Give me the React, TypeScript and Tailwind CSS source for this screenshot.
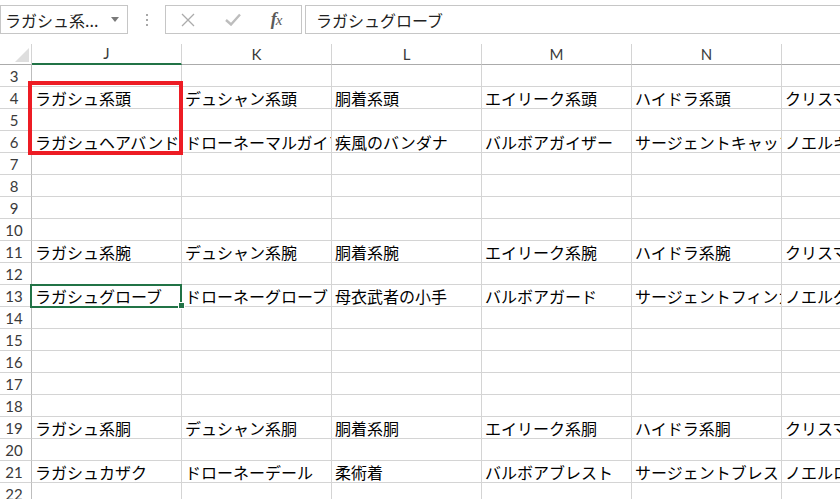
import React from "react";

const jp = { fontFamily: '"Noto Sans CJK JP", "Noto Sans", sans-serif' };
const lat = { fontFamily: 'Lato, "Open Sans", sans-serif' };

const cols = ["J", "K", "L", "M", "N", "O"];

const data: Record<number, string[]> = {
  4: ["ラガシュ系頭", "デュシャン系頭", "胴着系頭", "エイリーク系頭", "ハイドラ系頭", "クリスマス系頭"],
  6: ["ラガシュヘアバンド", "ドローネーマルガイア", "疾風のバンダナ", "バルボアガイザー", "サージェントキャップ", "ノエルキャップ"],
  11: ["ラガシュ系腕", "デュシャン系腕", "胴着系腕", "エイリーク系腕", "ハイドラ系腕", "クリスマス系腕"],
  13: ["ラガシュグローブ", "ドローネーグローブ", "母衣武者の小手", "バルボアガード", "サージェントフィンガー", "ノエルグローブ"],
  19: ["ラガシュ系胴", "デュシャン系胴", "胴着系胴", "エイリーク系胴", "ハイドラ系胴", "クリスマス系胴"],
  21: ["ラガシュカザク", "ドローネーデール", "柔術着", "バルボアブレスト", "サージェントブレスト", "ノエルローブ"],
};

const rows = Array.from({ length: 20 }, (_, i) => i + 3);

export default function App() {
  return (
    <div className="relative w-[840px] h-[499px] overflow-hidden bg-white select-none">
      {/* formula bar */}
      <div className="flex items-start h-[44px] pt-[5px]">
        <div
          className="w-[128px] shrink-0 h-[29px] border border-[#c6c6c6] flex items-center justify-between pl-[4px] pr-[8px] text-[16px] text-[#222]"
          style={jp}
        >
          <span className="whitespace-nowrap">ラガシュ系...</span>
          <svg width="8" height="5" viewBox="0 0 8 5">
            <path d="M0 0 L8 0 L4 5 Z" fill="#7a7a7a" />
          </svg>
        </div>
        <div className="w-[37px] shrink-0 h-[29px] flex flex-col items-center justify-center gap-[3px]">
          <div className="w-[2px] h-[2px] bg-[#a8a8a8]" />
          <div className="w-[2px] h-[2px] bg-[#a8a8a8]" />
          <div className="w-[2px] h-[2px] bg-[#a8a8a8]" />
        </div>
        <div className="w-[137px] shrink-0 h-[29px] border border-[#c6c6c6] flex items-center">
          <div className="w-[40px] flex justify-center ml-[2px]">
            <svg width="14" height="14" viewBox="0 0 14 14">
              <path d="M1 1 L13 13 M13 1 L1 13" stroke="#ababab" strokeWidth="1.3" />
            </svg>
          </div>
          <div className="w-[50px] flex justify-center">
            <svg width="16" height="13" viewBox="0 0 16 13">
              <path d="M1 7 L6 11.5 L15 1.5" stroke="#bdbdbd" strokeWidth="2.4" fill="none" />
            </svg>
          </div>
          <div
            className="flex-1 flex justify-center text-[18px] italic text-[#5a5a5a] pr-[6px]"
            style={{ fontFamily: '"Liberation Serif", serif' }}
          >
            <span className="font-bold tracking-[-1px]">f</span>
            <span className="text-[15px] mt-[3px]">x</span>
          </div>
        </div>
        <div
          className="flex-1 ml-[3px] mr-[-2px] h-[29px] border border-[#c6c6c6] flex items-center pl-[10px] text-[16px] text-[#222]"
          style={jp}
        >
          ラガシュグローブ
        </div>
      </div>

      {/* column headers */}
      <div className="flex h-[21px]">
        <div className="w-[32px] shrink-0 h-[21px] border-r border-b border-[#ababab] border-r-[#d4d4d4] relative">
          <svg className="absolute left-[15px] top-[4px]" width="14" height="14" viewBox="0 0 14 14">
            <path d="M14 0 L14 14 L0 14 Z" fill="#dedede" />
          </svg>
        </div>
        {cols.map((c, i) => (
          <div
            key={c}
            className={
              i === 0
                ? "w-[150px] shrink-0 h-[21px] border-r border-r-[#d4d4d4] border-b-2 border-b-[#217346] flex items-center justify-center text-[15px] text-[#3a3a3a]"
                : "w-[150px] shrink-0 h-[21px] border-r border-r-[#d4d4d4] border-b border-b-[#ababab] flex items-center justify-center text-[15px] text-[#3a3a3a]"
            }
            style={lat}
          >
            {c === "O" ? "" : c}
          </div>
        ))}
      </div>

      {/* grid rows */}
      {rows.map((r) => (
        <div key={r} className="flex h-[22px]">
          <div
            className="w-[32px] shrink-0 h-[22px] border-r border-r-[#bdbdbd] border-b border-b-[#d4d4d4] flex items-center justify-center pr-[3px] pt-[1px] text-[15px] text-[#3a3a3a]"
            style={lat}
          >
            {r}
          </div>
          {cols.map((c, i) => (
            <div
              key={c}
              className="w-[150px] shrink-0 h-[22px] border-r border-b border-[#d4d4d4] overflow-hidden whitespace-nowrap pl-[3px] pt-[1px] text-[16px] leading-[21px] text-black"
              style={jp}
            >
              {data[r] ? data[r][i] : ""}
            </div>
          ))}
        </div>
      ))}

      {/* red highlight box */}
      <div className="absolute left-[28px] top-[81px] w-[155px] h-[74px] border-4 border-[#ed1c24]" />

      {/* active cell */}
      <div className="absolute left-[30px] top-[284px] w-[152px] h-[24px] border-2 border-[#217346]" />
      <div className="absolute left-[178px] top-[302px] w-[7px] h-[7px] bg-white">
        <div className="w-[5px] h-[5px] mt-[1px] ml-[1px] bg-[#217346]" />
      </div>
    </div>
  );
}
